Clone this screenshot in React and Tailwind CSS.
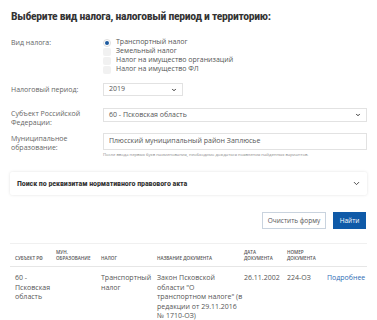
import { ChevronDown } from "lucide-react";

const narrow = "font-['Liberation_Sans_Narrow','Roboto_Condensed','DejaVu_Sans_Condensed',sans-serif]";

const taxes = [
  "Транспортный налог",
  "Земельный налог",
  "Налог на имущество организаций",
  "Налог на имущество ФЛ",
];

const cols = "grid grid-cols-[41px_45px_56px_87px_43px_40px_1fr]";

function Label({ children, className = "" }) {
  return (
    <div className={`text-[7px] leading-[9px] text-[#666] ${className}`}>{children}</div>
  );
}

export default function App() {
  return (
    <div className="h-[320px] w-[377px] overflow-hidden bg-white font-['Open_Sans',sans-serif] text-[#555]">
      <div className="pl-[11px] pr-[10px]">
        <h1 className={`pt-[8px] text-[11.7px] font-bold leading-[16px] tracking-[-0.3px] text-[#333] ${narrow}`}>
          Выберите вид налога, налоговый период и территорию:
        </h1>

        <div className="mt-[14px] grid grid-cols-[92px_1fr] items-start">
          <Label>Вид налога:</Label>
          <div className="flex flex-col">
            {taxes.map((t, i) => (
              <div key={t} className="flex h-[9px] items-center gap-[5px] text-[7px] text-[#555]">
                {i === 0 ? (
                  <span className="flex h-[8px] w-[8px] items-center justify-center rounded-full border border-[#ddd] bg-white">
                    <span className="h-[4px] w-[4px] rounded-full bg-[#1d5a9f]" />
                  </span>
                ) : (
                  <span className="h-[8px] w-[8px] rounded-[2px] bg-[#f1f1f1]" />
                )}
                <span>{t}</span>
              </div>
            ))}
          </div>

          <Label className="mt-[9px] flex h-[13px] items-center">Налоговый период:</Label>
          <div className="mt-[9px] flex h-[13px] w-[80px] items-center justify-between border border-[#e2e2e2] px-[5px] text-[7px] text-[#555]">
            <span>2019</span>
            <ChevronDown className="h-[6px] w-[6px] text-[#333]" strokeWidth={4} />
          </div>

          <Label className="mt-[12px] pt-[1px]">
            Субъект Российской
            <br />
            Федерации:
          </Label>
          <div className="mt-[12px] flex h-[14px] items-center justify-between border border-[#e2e2e2] px-[5px] text-[7px] text-[#555]">
            <span>60 - Псковская область</span>
            <ChevronDown className="h-[6px] w-[6px] text-[#333]" strokeWidth={4} />
          </div>

          <Label className="mt-[6px] pt-[1px]">
            Муниципальное
            <br />
            образование:
          </Label>
          <div className="mt-[6px]">
            <div className="flex h-[17px] items-center border border-[#e2e2e2] px-[5px] text-[7px] text-[#555]">
              Плюсский муниципальный район Заплюсье
            </div>
            <div className="mt-[2px] whitespace-nowrap text-[4.2px] leading-[6px] text-[#888]">
              После ввода первых букв наименования, необходимо дождаться появления найденных вариантов.
            </div>
          </div>
        </div>

        <div className="-ml-px mt-[14px] flex h-[23px] items-center justify-between rounded-[2px] bg-white pl-[7px] pr-[6px] shadow-[0_0_3px_rgba(0,0,0,0.12)]">
          <span className={`text-[8px] font-bold tracking-[-0.1px] text-[#333] ${narrow}`}>
            Поиск по реквизитам нормативного правового акта
          </span>
          <ChevronDown className="h-[9px] w-[9px] text-[#444]" strokeWidth={2.5} />
        </div>

        <div className="mt-[17px] flex justify-end gap-[7px] pr-px">
          <button className="h-[17px] w-[64px] border border-[#c9d3de] bg-white text-[6.5px] text-[#555]">
            Очистить форму
          </button>
          <button className="h-[17px] w-[33px] bg-[#0f5aa8] text-[6.5px] text-white">Найти</button>
        </div>

        <div className="-ml-px mt-[14px] border-t border-[#f0f0f0]">
          <div className={`${cols} border-b border-[#e6e6e6] pb-[5px] pt-[5px] text-[4.6px] font-semibold uppercase leading-[6px] text-[#555]`}>
            <div className="flex items-end pl-[5px]">Субъект РФ</div>
            <div className="pl-[5px]">
              Мун.
              <br />
              образование
            </div>
            <div className="flex items-end pl-[5px]">Налог</div>
            <div className="flex items-end pl-[5px]">Название документа</div>
            <div className="pl-[5px]">
              Дата
              <br />
              документа
            </div>
            <div className="pl-[5px]">
              Номер
              <br />
              документа
            </div>
            <div />
          </div>
          <div className={`${cols} whitespace-nowrap pt-[6px] text-[7px] leading-[9.5px] text-[#555]`}>
            <div className="pl-[5px]">
              60 -
              <br />
              Псковская
              <br />
              область
            </div>
            <div className="pl-[5px]" />
            <div className="pl-[5px]">
              Транспортный
              <br />
              налог
            </div>
            <div className="pl-[5px]">
              Закон Псковской
              <br />
              области "О
              <br />
              транспортном налоге" (в
              <br />
              редакции от 29.11.2016
              <br />№ 1710-ОЗ)
            </div>
            <div className="pl-[5px]">26.11.2002</div>
            <div className="pl-[5px]">224-ОЗ</div>
            <div className="pl-[5px] text-[#2f6db5]">Подробнее</div>
          </div>
        </div>
      </div>
    </div>
  );
}
